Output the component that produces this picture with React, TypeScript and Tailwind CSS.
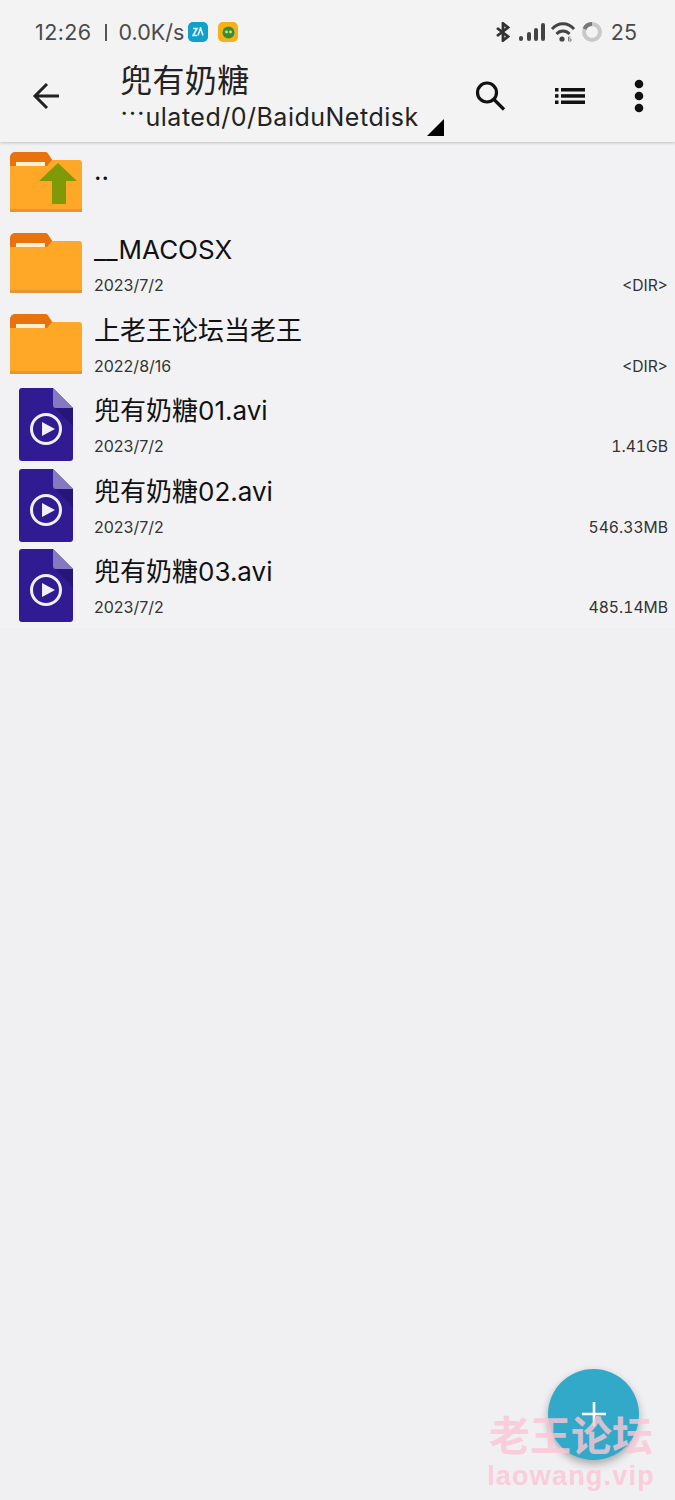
const FONT = "font-['Inter','Noto_Sans_CJK_SC',sans-serif]";

interface Entry {
  name: string;
  date: string;
  size: string;
  kind: "folder" | "video";
}

const entries: Entry[] = [
  { name: "__MACOSX", date: "2023/7/2", size: "<DIR>", kind: "folder" },
  { name: "上老王论坛当老王", date: "2022/8/16", size: "<DIR>", kind: "folder" },
  { name: "兜有奶糖01.avi", date: "2023/7/2", size: "1.41GB", kind: "video" },
  { name: "兜有奶糖02.avi", date: "2023/7/2", size: "546.33MB", kind: "video" },
  { name: "兜有奶糖03.avi", date: "2023/7/2", size: "485.14MB", kind: "video" },
];

function FolderIcon({ up = false }: { up?: boolean }) {
  return (
    <svg width="74" height="60" viewBox="0 0 74 60" className="shrink-0">
      <path d="M1 5a5 5 0 0 1 5-5h30a3 3 0 0 1 3 1.5L44 9V16H1z" fill="#e8730c" />
      <path d="M1 14H38L43 8H70a3 3 0 0 1 3 3V60H1z" fill="#ffa726" />
      <rect x="7" y="10" width="29" height="4" fill="#fdf0d0" />
      <rect x="1" y="57" width="72" height="3" fill="#e59535" />
      {up && <path d="M49 11 L68 29 H57 V52 H43 V29 H30z" fill="#7f9a06" />}
    </svg>
  );
}

function VideoIcon() {
  return (
    <svg width="74" height="73" viewBox="0 0 74 73" className="shrink-0">
      <path d="M13 0H44L64 20V70a3 3 0 0 1-3 3H13a3 3 0 0 1-3-3V3a3 3 0 0 1 3-3z" fill="#311b92" />
      <path d="M46 20 H64 V38z" fill="#281578" />
      <path d="M44 0 L64 20H47a3 3 0 0 1-3-3z" fill="#8679c4" />
      <circle cx="37" cy="41" r="14.5" fill="none" stroke="#f1eff8" strokeWidth="3" />
      <path d="M33 34 L46 41 L33 48z" fill="#f1eff8" />
    </svg>
  );
}

function Row({ entry }: { entry: Entry }) {
  return (
    <div className="flex h-[80.6px] items-center pl-[9px] pr-[7px]">
      {entry.kind === "folder" ? <FolderIcon /> : <VideoIcon />}
      <div className="ml-[11px] flex h-full min-w-0 flex-1 flex-col pt-[8px]">
        <div className="h-[38px] text-[26px] leading-[38px] text-[#111]">{entry.name}</div>
        <div className="mt-[4px] flex items-baseline justify-between text-[16px] leading-[24px] text-[#333]">
          <span>{entry.date}</span>
          <span className="text-[15.7px] tabular-nums">{entry.size}</span>
        </div>
      </div>
    </div>
  );
}

function StatusBar() {
  return (
    <div className="flex h-[48px] items-end justify-between pl-[35px] pr-[38px] pb-[2px] text-[21.5px] leading-[28px] text-[#4a4a4a]">
      <div className="flex items-center">
        <span className="tracking-[0.4px]">12:26</span>
        <span className="ml-[13px] mr-[12px] h-[17px] w-[2px] bg-[#555]" />
        <span>0.0K/s</span>
        <span className="ml-[4px] flex h-[20px] w-[20px] items-center justify-center rounded-[5px] bg-[#10a0cc]">
          <svg width="12" height="10" viewBox="0 0 12 10" fill="none" stroke="#e8f6fb" strokeWidth="1.6">
            <path d="M1 1.5H5L1 8.5H5" />
            <path d="M6 8.5L8.5 1L11 8.5" />
          </svg>
        </span>
        <span className="ml-[10px] flex h-[20px] w-[20px] items-center justify-center rounded-[5px] bg-[#f5b116]">
          <svg width="13" height="13" viewBox="0 0 13 13">
            <circle cx="6.5" cy="6.5" r="6" fill="#3d8b2f" />
            <circle cx="4.5" cy="6" r="1.4" fill="#bfe3a8" />
            <circle cx="8.5" cy="6" r="1.4" fill="#bfe3a8" />
          </svg>
        </span>
      </div>
      <div className="flex items-center">
        <svg width="17" height="20" viewBox="0 0 17 20" fill="none" stroke="#333" strokeWidth="2.8">
          <path d="M2 6 L13 14.5 L8 18.5 V1.5 L13 5.5 L2 14" />
        </svg>
        <svg width="28" height="18" viewBox="0 0 28 18" className="ml-[6px]" fill="#444">
          <rect x="1" y="13" width="4" height="5" rx="2" />
          <rect x="9" y="9" width="4" height="9" rx="2" />
          <rect x="16" y="5" width="4" height="13" rx="2" />
          <rect x="23" y="0" width="4" height="18" rx="2" />
        </svg>
        <svg width="24" height="20" viewBox="0 0 24 20" className="ml-[5px]" fill="none" stroke="#444" strokeWidth="2.8">
          <path d="M1 7 C7 0 17 0 23 7" />
          <path d="M5.5 12 C9 8 15 8 18.5 12" />
          <circle cx="11" cy="17" r="2.6" fill="#444" stroke="none" />
          <path d="M19.5 15H17.5V19H20V17H17.5" strokeWidth="0.8" stroke="#666" />
        </svg>
        <svg width="22" height="22" viewBox="0 0 22 22" className="ml-[6px]" fill="none">
          <circle cx="11" cy="11" r="8" stroke="#c9c9c9" strokeWidth="4" />
          <path d="M11 3 A8 8 0 0 0 3.5 8" stroke="#777" strokeWidth="4" />
        </svg>
        <span className="ml-[8px]">25</span>
      </div>
    </div>
  );
}

function Toolbar() {
  return (
    <div className="flex h-[94px] items-start pt-[14px]">
      <div className="flex w-[120px] justify-center pr-[28px] pt-[18px]">
        <svg width="32" height="32" viewBox="0 0 32 32" fill="none" stroke="#222" strokeWidth="3">
          <path d="M29 16H5M17 4L5 16L17 28" />
        </svg>
      </div>
      <div className="flex-1">
        <div className="text-[32px] leading-[38px] tracking-[0.4px] text-[#222]">兜有奶糖</div>
        <div className="mt-[1px] flex items-end">
          <span className="text-[25px] leading-[32px] tracking-[0.5px] text-[#222]">
            <span className="inline-block -translate-y-[3px] font-['Noto_Sans_CJK_JP'] leading-[20px]">⋯</span>ulated/0/BaiduNetdisk
          </span>
          <span className="mb-[-3px] ml-[8px] h-0 w-0 border-b-[17px] border-l-[17px] border-b-black border-l-transparent" />
        </div>
      </div>
      <div className="flex items-center pr-[31px] pt-[17px]">
        <svg width="32" height="32" viewBox="0 0 32 32" fill="none" stroke="#111" strokeWidth="3.2">
          <circle cx="13" cy="12.5" r="9.5" />
          <path d="M20 19.5 L30 29.5" />
        </svg>
        <svg width="32" height="18" viewBox="0 0 32 18" className="ml-[48px]" fill="#111">
          <rect x="1" y="1" width="3.5" height="3.5" />
          <rect x="7" y="1" width="24" height="3.5" />
          <rect x="1" y="7.2" width="3.5" height="3.5" />
          <rect x="7" y="7.2" width="24" height="3.5" />
          <rect x="1" y="13.5" width="3.5" height="3.5" />
          <rect x="7" y="13.5" width="24" height="3.5" />
        </svg>
        <svg width="10" height="34" viewBox="0 0 10 34" className="ml-[48px]" fill="#111">
          <circle cx="5" cy="5" r="4.3" />
          <circle cx="5" cy="17" r="4.3" />
          <circle cx="5" cy="29" r="4.3" />
        </svg>
      </div>
    </div>
  );
}

export default function App() {
  return (
    <div className={`relative h-[1500px] w-[675px] overflow-hidden bg-[#f0f0f3] ${FONT}`}>
      <header className="relative h-[142px] bg-[#f3f3f3] shadow-[0_1px_3px_rgba(0,0,0,0.2)]">
        <StatusBar />
        <Toolbar />
      </header>

      <div className="bg-[#f2f2f5] pt-[1px] pb-[2px]">
        <div className="flex h-[80px] items-start pl-[9px] pt-[9px]">
          <FolderIcon up />
          <span className="ml-[11px] text-[26px] leading-[38px] text-[#111]">..</span>
        </div>
        {entries.map((entry) => (
          <Row key={entry.name} entry={entry} />
        ))}
      </div>

      {/* floating add button */}
      <div className="absolute left-[548px] top-[1369px] flex h-[91px] w-[91px] justify-center rounded-full bg-[#33a9c9] pt-[33px] shadow-[0_4px_8px_rgba(0,0,0,0.3)]">
        <svg width="24" height="24" viewBox="0 0 24 24" stroke="#fff" strokeWidth="2.6">
          <path d="M12 0V24M0 12H24" />
        </svg>
      </div>

      {/* watermark */}
      <div className="absolute left-[486px] top-[1413px] w-[170px] whitespace-nowrap text-center font-['Liberation_Sans','Noto_Sans_CJK_SC',sans-serif] font-bold text-[#fcc6d4] opacity-80">
        <div className="text-[41px] leading-[48px]">老王论坛</div>
        <div className="text-[27px] leading-[30px] tracking-[1.2px]">laowang.vip</div>
      </div>
    </div>
  );
}
